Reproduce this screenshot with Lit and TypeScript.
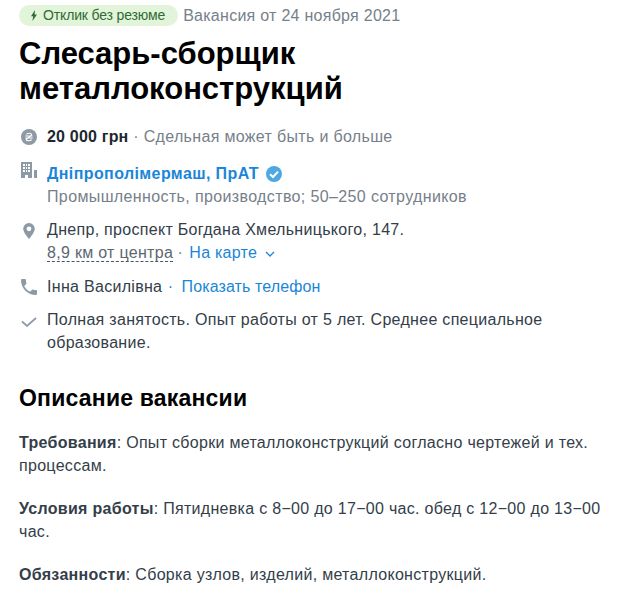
import { html, css, LitElement } from "lit";
import { customElement } from "lit/decorators.js";

@customElement("app-root")
export class AppRoot extends LitElement {
	static styles = css`
		:host {
			display: block;
			font-family: "Liberation Sans", Arial, sans-serif;
			font-size: 16px;
			line-height: 23px;
			color: #333e49;
		}
		.page {
			padding: 5px 20px 0 19px;
			height: 588px;
			overflow: hidden;
		}
		.top {
			display: flex;
			align-items: center;
			gap: 5px;
			height: 21px;
		}
		.badge {
			display: flex;
			align-items: center;
			gap: 6px;
			height: 21px;
			padding: 0 13px 0 12px;
			border-radius: 11px;
			background: #e2f4d9;
			color: #2f6b34;
			font-size: 14px;
			letter-spacing: -0.15px;
		}
		.date {
			color: #76808a;
			letter-spacing: 0.27px;
		}
		h1 {
			margin: 10px 0 0;
			font-size: 31px;
			line-height: 35px;
			color: #000;
			font-weight: bold;
		}
		.rows {
			margin-top: 19px;
			display: flex;
			flex-direction: column;
		}
		.row {
			display: flex;
		}
		.icon {
			flex: none;
			width: 28px;
			padding-left: 2px;
			box-sizing: border-box;
		}
		.icon svg {
			display: block;
		}
		.icon.mt4 {
			padding-top: 4px;
		}
		.icon.pin {
			padding: 5px 0 0 4px;
		}
		.icon.tick {
			padding-top: 9px;
		}
		.salary {
			margin-bottom: 14px;
		}
		.company {
			margin-bottom: 10px;
		}
		.loc {
			margin-bottom: 11px;
		}
		.phone {
			margin-bottom: 10px;
		}
		.name {
			display: flex;
			align-items: center;
			gap: 7px;
		}
		b.dark {
			color: #1d2730;
			letter-spacing: 0.2px;
		}
		.muted {
			color: #76808a;
		}
		.pay-note {
			letter-spacing: 0.33px;
		}
		.industry {
			letter-spacing: 0.37px;
		}
		a {
			color: #1a86d8;
			text-decoration: none;
		}
		a.strong {
			font-weight: bold;
			letter-spacing: 0.4px;
		}
		a.map {
			letter-spacing: 0.25px;
		}
		a.tel {
			letter-spacing: 0.12px;
		}
		.dash {
			border-bottom: 1px dashed #4a5560;
			color: #5d6772;
			letter-spacing: 0.3px;
		}
		.sep-map {
			margin-right: 2px;
		}
		.sep-tel {
			margin: 0 4px 0 1px;
			color: #1a86d8;
		}
		.chevron {
			margin-left: 3px;
			vertical-align: 1px;
		}
		.wide {
			letter-spacing: 0.3px;
		}
		.line {
			display: block;
		}
		h2 {
			margin: 30px 0 0;
			font-size: 23px;
			line-height: 28px;
			color: #000;
			font-weight: bold;
			letter-spacing: 0.2px;
		}
		p {
			margin: 0 0 20px;
		}
		.desc {
			margin-top: 19px;
		}
	`;

	render() {
		return html`<div class="page">
			<div class="top">
				<span class="badge">
					<svg width="6" height="11" viewBox="0 0 6 11"><path d="M4 0 0 6.2h2.2L1.4 11 6 4.4H3.6z" fill="#2f6b34"/></svg>
					Отклик без резюме
				</span>
				<span class="date">Вакансия от 24 ноября 2021</span>
			</div>
			<h1>Слесарь-сборщик<br />металлоконструкций</h1>
			<div class="rows">
				<div class="row salary">
					<div class="icon mt4">
						<svg width="16" height="16" viewBox="0 0 16 16">
							<circle cx="8" cy="8" r="8" fill="#8d99a5"/>
							<path d="M5.4 5.4C6 3.9 10.2 3.7 10.6 5.6 11 7.6 5.2 8.6 5.2 10.6c.3 1.6 4.7 1.5 5.4-.1M4.4 7h7.2M4.4 9h7.2" fill="none" stroke="#fff" stroke-width="1.2"/>
						</svg>
					</div>
					<span><b class="dark">20 000 грн</b><span class="muted pay-note"> · Сдельная может быть и больше</span></span>
				</div>
				<div class="row company">
					<div class="icon">
						<svg width="16" height="16" viewBox="0 0 16 16">
							<path fill-rule="evenodd" d="M0 0h11v16H7v-3H4v3H0zM2 2v2h2V2zm3 0v2h1V2zm2 0v2h2V2zM2 5v2h2V5zm3 0v2h1V5zm2 0v2h2V5zM2 8v2h2V8zm3 0v2h1V8zm2 0v2h2V8z" fill="#8d99a5"/>
							<path d="M13 8h3v8h-3z" fill="#8d99a5"/>
						</svg>
					</div>
					<div>
						<div class="name">
							<a class="strong" href="#">Дніпрополімермаш, ПрАТ</a>
							<svg width="16" height="16" viewBox="0 0 16 16">
								<circle cx="8" cy="8" r="8" fill="#4ea8e2"/>
								<path d="M4 8.2l3 2.8 5-5.4" fill="none" stroke="#fff" stroke-width="2"/>
							</svg>
						</div>
						<div class="muted industry">Промышленность, производство; 50–250 сотрудников</div>
					</div>
				</div>
				<div class="row loc">
					<div class="icon pin">
						<svg width="12" height="16" viewBox="0 0 12 16">
							<path fill-rule="evenodd" d="M6 0a5.8 5.8 0 0 1 5.8 5.8C11.8 9.6 6 16 6 16S.2 9.6.2 5.8A5.8 5.8 0 0 1 6 0zm0 3.4a2.4 2.4 0 1 0 0 4.8 2.4 2.4 0 0 0 0-4.8z" fill="#8d99a5"/>
						</svg>
					</div>
					<div>
						<div class="wide">Днепр, проспект Богдана Хмельницького, 147.</div>
						<div>
							<span class="dash">8,9 км от центра</span><span class="muted sep-map"> · </span><a class="map" href="#">На карте</a>
							<svg class="chevron" width="10" height="6" viewBox="0 0 10 6"><path d="M1 1l4 4 4-4" fill="none" stroke="#1a86d8" stroke-width="1.3"/></svg>
						</div>
					</div>
				</div>
				<div class="row phone">
					<div class="icon mt4">
						<svg width="16" height="16" viewBox="3 3 18 18">
							<path d="M6.62 10.79c1.44 2.83 3.76 5.14 6.59 6.59l2.2-2.2c.27-.27.67-.36 1.02-.24 1.12.37 2.33.57 3.57.57.55 0 1 .45 1 1V20c0 .55-.45 1-1 1-9.39 0-17-7.61-17-17 0-.55.45-1 1-1h3.5c.55 0 1 .45 1 1 0 1.25.2 2.45.57 3.57.11.35.03.74-.25 1.02l-2.2 2.2z" fill="#8d99a5"/>
						</svg>
					</div>
					<span><span class="wide">Інна Василівна</span> <span class="sep-tel">· </span><a class="tel" href="#">Показать телефон</a></span>
				</div>
				<div class="row">
					<div class="icon tick">
						<svg width="16" height="10" viewBox="0 0 16 10">
							<path d="M1 4.5l5 4.5L15 1" fill="none" stroke="#8d99a5" stroke-width="1.7"/>
						</svg>
					</div>
					<div class="wide">
						<span class="line">Полная занятость. Опыт работы от 5 лет. Среднее специальное</span>
						<span class="line">образование.</span>
					</div>
				</div>
			</div>
			<h2>Описание вакансии</h2>
			<div class="desc">
				<p class="wide">
					<span class="line"><b>Требования</b>: Опыт сборки металлоконструкций согласно чертежей и тех.</span>
					<span class="line">процессам.</span>
				</p>
				<p class="wide">
					<span class="line"><b>Условия работы</b>: Пятидневка с 8−00 до 17−00 час. обед с 12−00 до 13−00</span>
					<span class="line">час.</span>
				</p>
				<p class="wide"><b>Обязанности</b>: Сборка узлов, изделий, металлоконструкций.</p>
			</div>
		</div>`;
	}
}
